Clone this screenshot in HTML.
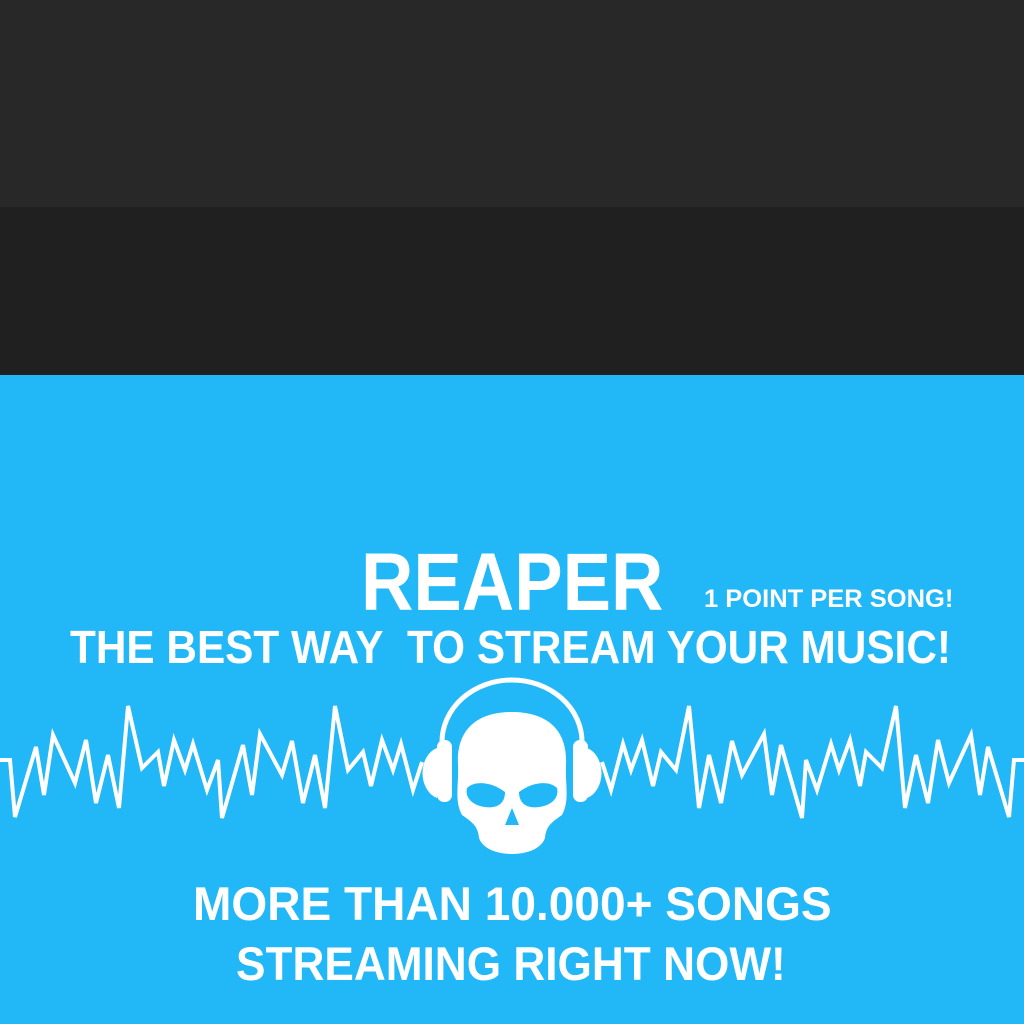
<!DOCTYPE html>
<html><head><meta charset="utf-8"><style>
html,body{margin:0;padding:0}
body{width:1024px;height:1024px;position:relative;overflow:hidden;background:#22b7f6;font-family:"Liberation Sans",sans-serif}
.top{position:absolute;left:0;top:0;width:1024px;height:207px;background:#282828}
.mid{position:absolute;left:0;top:207px;width:1024px;height:168px;background:#202020}
.t{position:absolute;color:#fff;font-weight:bold;white-space:nowrap;transform-origin:0 0}
</style></head><body>
<div class="top"></div><div class="mid"></div>
<div class="t" style="left:361px;top:536px;font-size:82px;transform:scaleX(0.885)">REAPER</div>
<div class="t" style="left:704px;top:585px;font-size:25px;transform:scaleX(1.02)">1 POINT PER SONG!</div>
<div class="t" style="left:70px;top:620px;font-size:46px;transform:scaleX(0.92)">THE BEST WAY&nbsp; TO STREAM YOUR MUSIC!</div>
<div class="t" style="left:193px;top:876px;font-size:47px;transform:scaleX(0.98)">MORE THAN 10.000+ SONGS</div>
<div class="t" style="left:236px;top:936px;font-size:47px;transform:scaleX(0.94)">STREAMING RIGHT NOW!</div>
<svg width="1024" height="1024" style="position:absolute;left:0;top:0">
<g fill="none" stroke="#fff" stroke-width="4" stroke-linejoin="miter">
<polyline points="0,760 10,760 15,817 36,747 44,795 53,735 75,783 86,740 96,803 108,755 119,808 128,706 142,768 158,752 164,786 174,740 185,770 193,744 207,790 218,760 222,818 243,745 252,795 260,734 282,775 292,741 303,803 315,755 325,808 335,706 348,770 363,752 371,786 382,740 393,770 401,744 413,790 422,762"/>
<polyline transform="translate(1024,0) scale(-1,1)" points="0,760 10,760 15,817 36,747 44,795 53,735 75,783 86,740 96,803 108,755 119,808 128,706 142,768 158,752 164,786 174,740 185,770 193,744 207,790 218,760 222,818 243,745 252,795 260,734 282,775 292,741 303,803 315,755 325,808 335,706 348,770 363,752 371,786 382,740 393,770 401,744 413,790 422,762"/>
<path d="M442,742 A70,62 0 0 1 582,742" stroke-width="5"/>
</g>
<g fill="#fff">
<path d="M437,748 A20,26 0 0 0 437,798 Z"/>
<rect x="437" y="740" width="15" height="62" rx="7"/>
<path d="M587,748 A20,26 0 0 1 587,798 Z"/>
<rect x="573" y="740" width="15" height="62" rx="7"/>
<path d="M512,712 C545,712 568,728 566,765 C565,785 570,800 562,815 C552,822 546,826 545,838 C540,852 520,854 512,854 C504,854 484,852 479,838 C478,826 472,822 462,815 C454,800 459,785 458,765 C456,728 479,712 512,712 Z"/>
</g>
<g fill="#22b7f6">
<path d="M467,788 C475,780 492,782 505,792 C505,805 495,810 480,806 C470,803 465,796 467,788 Z"/>
<path d="M557,788 C549,780 532,782 519,792 C519,805 529,810 544,806 C554,803 559,796 557,788 Z"/>
<path d="M512,808 L519,825 L505,825 Z"/>
</g>
</svg>
</body></html>
